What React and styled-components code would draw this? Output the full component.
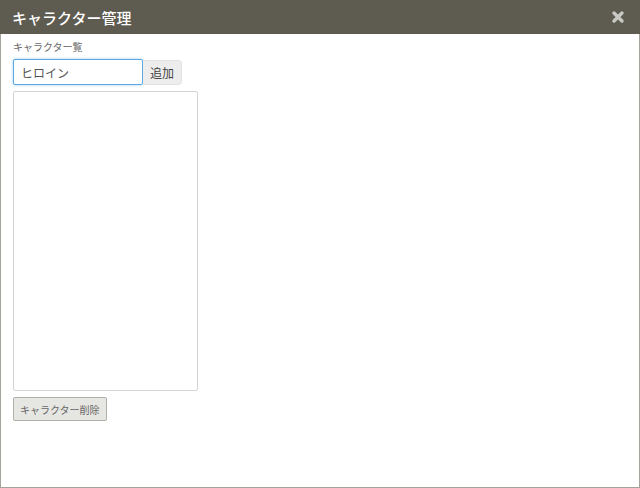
import React from 'react';
import styled, { createGlobalStyle } from 'styled-components';

const GlobalStyle = createGlobalStyle`
    html, body {
        margin: 0;
        padding: 0;
        background: #fff;
    }
    body {
        font-family: "Noto Sans CJK JP", "Noto Sans", sans-serif;
    }
`;

const Dialog = styled.div`
    width: 640px;
    height: 488px;
    box-sizing: border-box;
    border: 1px solid #a5a39c;
    border-top: none;
    display: flex;
    flex-direction: column;
    background: #fff;
`;

const TitleBar = styled.div`
    height: 34px;
    background: #5e5b50;
    display: flex;
    align-items: center;
    justify-content: space-between;
    padding: 0 14px 0 12px;
    flex-shrink: 0;
    margin: 0 -1px;
`;

const Title = styled.h1`
    margin: 0;
    color: #fff;
    font-size: 15px;
    font-weight: 500;
    line-height: 1;
`;

const CloseButton = styled.button`
    border: none;
    background: none;
    padding: 0;
    width: 16px;
    height: 16px;
    display: flex;
    align-items: center;
    justify-content: center;
    cursor: pointer;
`;

const Body = styled.div`
    padding: 7px 12px;
    display: flex;
    flex-direction: column;
    align-items: flex-start;
`;

const Label = styled.label`
    font-size: 10px;
    color: #666;
    line-height: 12px;
    margin-bottom: 6px;
`;

const InputRow = styled.div`
    display: flex;
    align-items: center;
`;

const NameInput = styled.input`
    width: 130px;
    height: 26px;
    box-sizing: border-box;
    border: 1px solid #5aa9e6;
    border-radius: 2px;
    box-shadow: 0 0 3px rgba(90, 169, 230, 0.6);
    padding: 0 7px;
    font-family: inherit;
    font-size: 12px;
    color: #555;
    outline: none;
`;

const AddButton = styled.button`
    height: 25px;
    box-sizing: border-box;
    border: 1px solid #e2e2e2;
    border-left: none;
    border-radius: 0 4px 4px 0;
    background: #ededed;
    padding: 0 7px;
    font-family: inherit;
    font-size: 12px;
    color: #444;
`;

const ListBox = styled.select`
    width: 185px;
    height: 300px;
    box-sizing: border-box;
    border: 1px solid #d4d4d4;
    margin-top: 6px;
    background: #fff;
    outline: none;
`;

const DeleteButton = styled.button`
    margin-top: 6px;
    height: 24px;
    box-sizing: border-box;
    border: 1px solid #b0b0aa;
    border-radius: 2px;
    background: #e6e6e2;
    padding: 0 6px;
    font-family: inherit;
    font-size: 10px;
    color: #666;
`;

const App = () => {
    return (
        <>
            <GlobalStyle />
            <Dialog>
                <TitleBar>
                    <Title>キャラクター管理</Title>
                    <CloseButton aria-label='close'>
                        <svg width='14' height='14' viewBox='0 0 14 14'>
                            <path
                                d='M3 3 L11 11 M11 3 L3 11'
                                stroke='#c8c8c4'
                                strokeWidth='3.4'
                                strokeLinecap='round'
                            />
                        </svg>
                    </CloseButton>
                </TitleBar>
                <Body>
                    <Label>キャラクター覧</Label>
                    <InputRow>
                        <NameInput defaultValue='ヒロイン' />
                        <AddButton>追加</AddButton>
                    </InputRow>
                    <ListBox size={10} />
                    <DeleteButton>キャラクター削除</DeleteButton>
                </Body>
            </Dialog>
        </>
    );
};

export default App;
